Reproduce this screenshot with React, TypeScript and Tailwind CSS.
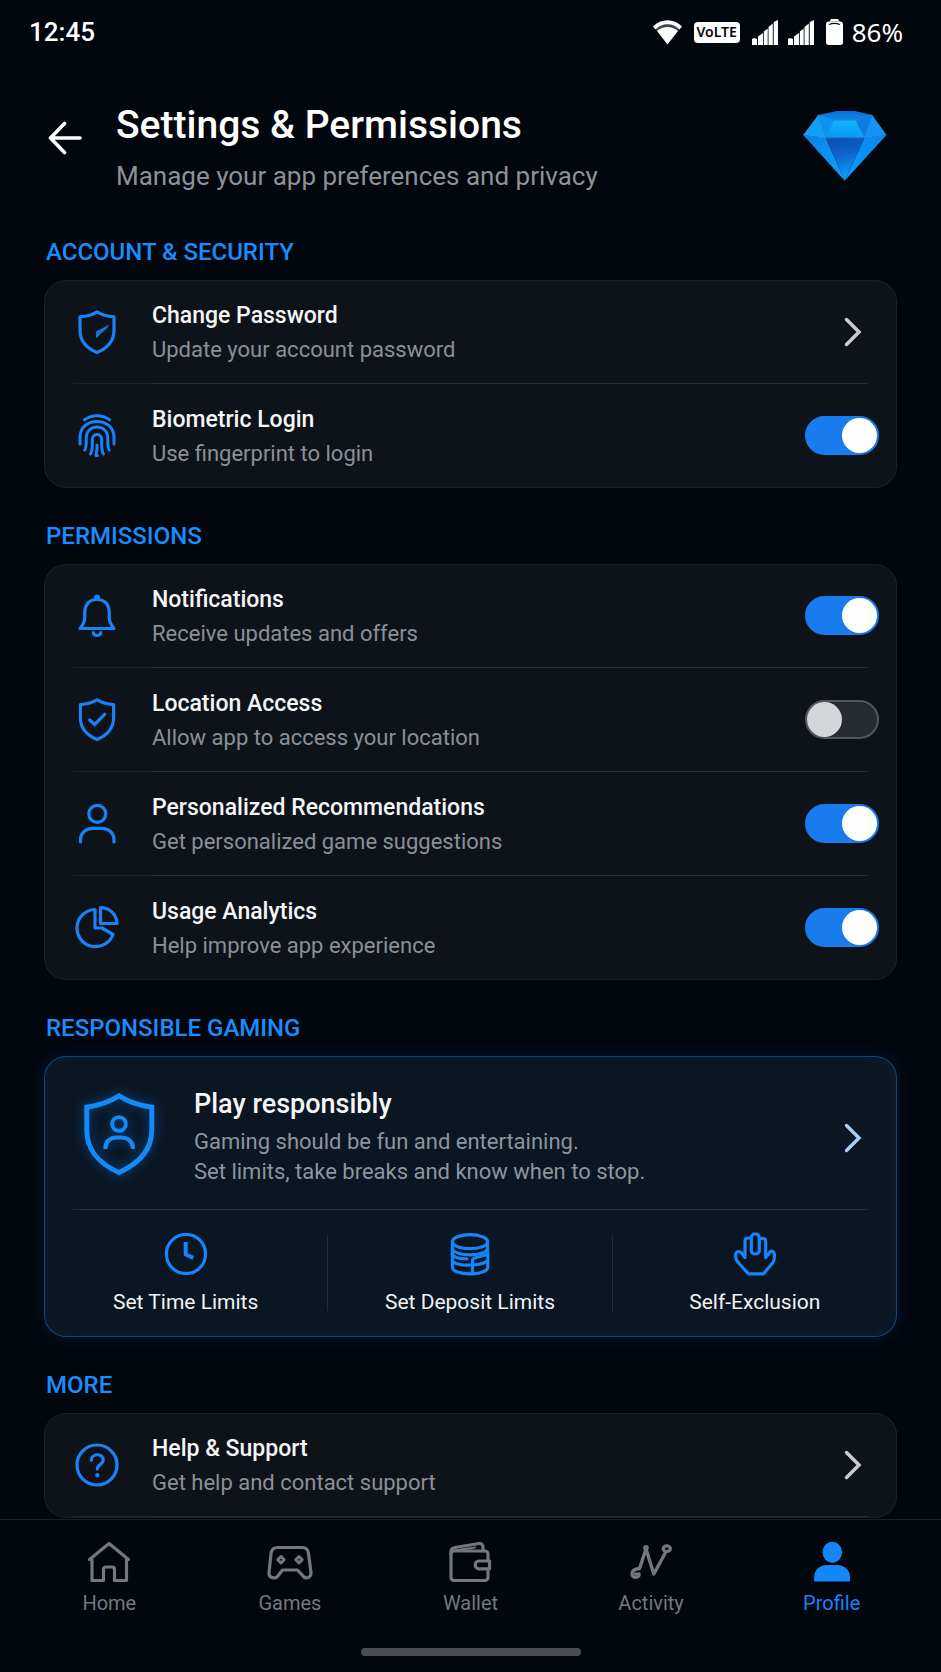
import React, { useState } from 'react';

interface IconProps {
  className?: string;
}

const line = {
  fill: 'none',
  stroke: 'currentColor',
  strokeWidth: 3.2,
  strokeLinecap: 'round' as const,
  strokeLinejoin: 'round' as const,
  'aria-hidden': true,
};

const SHIELD = 'M22 1.8C17 5 11 6.3 5 6.8V20c0 10.5 6 18 17 22.4 11-4.4 17-11.9 17-22.4V6.8C33 6.3 27 5 22 1.8z';

function ShieldKeyIcon({ className }: IconProps) {
  return (
    <svg viewBox="0 0 44 44" className={className} {...line}>
      <path d={SHIELD} />
      <path d="M34 14.5L32.5 18L26 23.5L22 27.8H21L20.8 21.5L25 19.5Z" fill="currentColor" stroke="none" opacity="0.85" />
    </svg>
  );
}

function ShieldCheckIcon({ className }: IconProps) {
  return (
    <svg viewBox="0 0 44 45" className={className} {...line}>
      <path d={SHIELD} />
      <path d="M14.5 22.5L19.5 27.2L30 16.5" />
    </svg>
  );
}

function FingerprintIcon({ className }: IconProps) {
  return (
    <svg viewBox="0 0 44 44" className={className} {...line} strokeWidth={3}>
      <path d="M9.5 5.8C17 .4 27 .4 34.5 5.8" />
      <path d="M5 30V23.5C5 2 39 2 39 23.5V30" />
      <path d="M9.8 36C11.5 33.5 11.2 31 11.2 24.5C11.2 9 32.8 9 32.8 24.5C32.8 31 32.5 33.5 34.2 36" />
      <path d="M15.5 40C17.8 36.5 17.3 33 17.3 26C17.3 18.5 26.7 18.5 26.7 26C26.7 33 26.2 36.5 28.5 40" />
      <path d="M22 31V35L21 41.5H22.5" />
    </svg>
  );
}

function BellIcon({ className }: IconProps) {
  return (
    <svg viewBox="0 0 44 44" className={className} {...line}>
      <path d="M22 5.5C14 5.5 9.8 11 9.8 18V23C9.8 28 8 31 5 34.5H39C36 31 34.2 28 34.2 23V18C34.2 11 30 5.5 22 5.5Z" />
      <circle cx="22" cy="3.6" r="1.5" />
      <path d="M18.3 38.5C18.3 42.5 25.7 42.5 25.7 38.5" />
    </svg>
  );
}

function PersonIcon({ className }: IconProps) {
  return (
    <svg viewBox="0 0 44 44" className={className} {...line}>
      <circle cx="22.3" cy="11.8" r="8.5" />
      <path d="M5.5 40V37.5C5.5 31 11 26.3 17.5 26.3H27C33.5 26.3 39 31 39 37.5V40" />
    </svg>
  );
}

function PieIcon({ className }: IconProps) {
  return (
    <svg viewBox="0 0 44 44" className={className} {...line}>
      <path d="M20 3.5V22H27L38 28.5A18.6 18.6 0 1 1 20 3.5Z" />
      <path d="M25.5 1.6V17.5H42A16.5 16.5 0 0 0 25.5 1.6Z" />
    </svg>
  );
}

function HelpIcon({ className }: IconProps) {
  return (
    <svg viewBox="0 0 44 44" className={className} {...line}>
      <circle cx="22" cy="22" r="20" />
      <path d="M16.3 17.2C16.3 10 28.3 10 28.3 17C28.3 21 22.3 21.5 22.3 26" />
      <path d="M22.3 32V32.6" strokeWidth={4} />
    </svg>
  );
}

function ClockIcon({ className }: IconProps) {
  return (
    <svg viewBox="0 0 44 44" className={className} {...line}>
      <circle cx="22" cy="22" r="19.6" />
      <path d="M21.7 12V22.5L27.5 25" strokeWidth={4} strokeLinecap="square" />
    </svg>
  );
}

function CoinsIcon({ className }: IconProps) {
  return (
    <svg viewBox="0 0 44 44" className={className} {...line}>
      <ellipse cx="22" cy="9.7" rx="17.6" ry="7" />
      <path d="M4.4 9.7V35.5C4.4 39 12 42 23 41.8" />
      <path d="M39.6 9.7V20" />
      <path d="M4.4 16.5C6 25 38 25 39.6 16.5" />
      <path d="M4.4 22.5C7 26 12 27 19 27" />
      <path d="M4.4 28.5C7 33 14 33.5 22 33" />
      <path d="M24.5 28.5C24.5 26.5 26 26 28 25.5C33 24.500 37 23.500 39.800 21.500V35.500C39.800 38.500 33 41.800 24.500 41.800Z" />
      <path d="M25 33C31 32.5 37 31 39.8 28.5" />
    </svg>
  );
}

function HandIcon({ className }: IconProps) {
  return (
    <svg viewBox="0 0 44 44" className={className} {...line}>
      <rect x="18.3" y="2" width="8" height="20" rx="3.5" />
      <path d="M18 6H15C12.5 6 12 7.5 12 9.5V25.5L8.5 21C5.5 18 2 20 2.6 24.5C2.6 28 4 29.5 15.5 41.8H30.5L40 30.5C41.5 28.5 41.5 27 41.5 24C41.5 18.5 37.5 17.5 36 21.5L32.7 25.5V9.5C32.7 7 32 6 26.5 6.5" />
    </svg>
  );
}

function HomeIcon({ className }: IconProps) {
  return (
    <svg viewBox="0 0 44 44" className={className} {...line}>
      <path d="M5 19.5H2.5L22 3.5L41.5 19.5H39.5V40.5H27.5V29.5C27.5 28 26.5 27 25 27H19C17.5 27 16.5 28 16.5 29.5V40.5H5Z" />
    </svg>
  );
}

function GamepadIcon({ className }: IconProps) {
  return (
    <svg viewBox="0 0 48 44" className={className} {...line}>
      <path d="M11.5 7.5H36.5C40.5 7.5 42 10 42.5 13.5L45 32.5C45.5 37 40.5 39.5 37.5 36.5L31.5 30H16.5L11.5 36.5C8.5 39.5 2.5 37.5 3 33L5 13.5C5.5 10 7.5 7.5 11.5 7.5Z" />
      <path d="M15 16.5L18.2 19.8L15 23L11.8 19.8Z" strokeWidth={3} />
      <path d="M33 16.5L36.2 19.8L33 23L29.8 19.8Z" strokeWidth={3} />
    </svg>
  );
}

function WalletIcon({ className }: IconProps) {
  return (
    <svg viewBox="0 0 44 44" className={className} {...line}>
      <rect x="3" y="11" width="37" height="29.5" rx="3" />
      <path d="M3 14V11C3 8.5 4.5 8 7 7.5L31 3.5C34 3.2 35 5 35 7.5V11" />
      <path d="M6 10.5L27 7.5" strokeWidth={2} />
      <path d="M41.5 21H31C26 21 26 28.8 31 28.8H41.5Z" className="fill-[#02060d]" />
    </svg>
  );
}

function ActivityIcon({ className }: IconProps) {
  return (
    <svg viewBox="0 0 44 44" className={className} {...line}>
      <path d="M10 34C11 37.5 3 39 3 34C3 30 6.5 29 10.5 28.5L17 9L24.8 34L36.5 12.5" strokeWidth={3.4} />
      <path d="M6.5 34H8" />
      <circle cx="17" cy="7.8" r="1.2" />
      <ellipse cx="37.8" cy="8.7" rx="3.6" ry="2.8" />
    </svg>
  );
}

function ProfileIcon({ className }: IconProps) {
  return (
    <svg viewBox="0 0 44 44" className={className} fill="currentColor" aria-hidden>
      <ellipse cx="22.3" cy="12.3" rx="9.8" ry="10.6" />
      <path d="M4.2 41.5V37C4.2 30 9.5 25 17 25H27C34.5 25 40 30 40 37V41.5Z" />
    </svg>
  );
}

function ResponsibleShieldIcon({ className }: IconProps) {
  return (
    <svg viewBox="0 0 72 84" className={className} {...line} strokeWidth={5} strokeLinejoin="miter">
      <path d="M36 3.8C27 9.5 15 13.5 3.8 15.2V38C3.8 58 15 71 36 80.5C57 71 68.8 58 68.8 38V15.2C57 13.5 45 9.5 36 3.8Z" />
      <circle cx="36" cy="32" r="6.9" strokeWidth={3.8} />
      <path d="M22.5 57V55.5C22.5 49 28 45.5 33 45.5H39C44 45.5 49.8 49 49.8 55.5V57" strokeWidth={4.2} strokeLinecap="butt" />
    </svg>
  );
}

function ChevronIcon({ className }: IconProps) {
  return (
    <svg viewBox="0 0 18 32" className={className} {...line} strokeWidth={3.5} strokeLinejoin="miter">
      <path d="M2.5 3.5L15 16L2.5 28.5" />
    </svg>
  );
}

function DiamondLogo({ className }: IconProps) {
  return (
    <svg viewBox="0 0 252 211" className={className} aria-hidden>
      <defs>
        <linearGradient id="table" x1="0" y1="0" x2="0" y2="1">
          <stop offset="0" stopColor="#0a6fd6" />
          <stop offset="1" stopColor="#1184ea" />
        </linearGradient>
        <linearGradient id="front" x1="0" y1="0" x2="0" y2="1">
          <stop offset="0" stopColor="#10b4fc" />
          <stop offset="1" stopColor="#0a98f6" />
        </linearGradient>
        <linearGradient id="pavilion" x1="0" y1="0" x2="0.2" y2="1">
          <stop offset="0" stopColor="#0b4cae" />
          <stop offset="0.45" stopColor="#0f62cc" />
          <stop offset="1" stopColor="#0aa0fb" />
        </linearGradient>
        <linearGradient id="side" x1="0" y1="0" x2="1" y2="1">
          <stop offset="0" stopColor="#0c7fe6" />
          <stop offset="1" stopColor="#08a6ff" />
        </linearGradient>
        <linearGradient id="sideRight" x1="1" y1="0" x2="0" y2="1">
          <stop offset="0" stopColor="#0a84ec" />
          <stop offset="1" stopColor="#08a0ff" />
        </linearGradient>
      </defs>
      <path d="M45 12L102 0H155L208 12L158 28H92Z" fill="url(#table)" />
      <path d="M92 28H158L185 81H68Z" fill="url(#front)" />
      <path d="M45 12L92 28L68 81Z" fill="#0b93f0" />
      <path d="M45 12L68 81L0 72Z" fill="#129ff8" />
      <path d="M208 12L158 28L185 81Z" fill="#0a7de2" />
      <path d="M208 12L185 81L251 72Z" fill="#1493f4" />
      <path d="M0 72L68 81L125 210Z" fill="url(#side)" />
      <path d="M251 72L185 81L125 210Z" fill="url(#sideRight)" />
      <path d="M68 81H185L125 210Z" fill="url(#pavilion)" />
      <path d="M45 12L92 28H158L208 12M92 28L68 81L45 12M158 28L185 81L208 12M0 72L68 81H185L251 72" fill="none" stroke="#3cc0ff" strokeWidth="2" opacity="0.55" />
    </svg>
  );
}

function SignalIcon({ className }: IconProps) {
  return (
    <svg viewBox="0 0 26 25" className={className} fill="currentColor" aria-hidden>
      <path d="M0 19L2 18L5 19V25H0ZM6 16.5L11 13V25H6ZM11.8 11.5L15.7 8.5V25H11.8ZM16.5 7L20.8 3.5V25H16.5ZM21.7 2L26 0V25H21.7Z" />
    </svg>
  );
}

function StatusBar() {
  return (
    <div className="flex h-16 items-center justify-between pr-[38px] pl-[29px]">
      <span className="text-[26px] leading-8 font-medium">12:45</span>
      <div className="flex items-center">
        <svg viewBox="0 0 29 25" className="h-[25px] w-[29px]" fill="currentColor" aria-label="Wi-Fi">
          <path d="M0 6.5C8-2 21-2 29 6.5L26.5 9.5C19.5 2.5 9.5 2.5 2.5 9.5Z" />
          <path d="M4 11C10 5.5 19 5.5 25 11L14.5 24.5Z" />
          <path d="M2.5 9.5C9.5 2.5 19.5 2.5 26.5 9.5L25 11C19 5.5 10 5.5 4 11Z" opacity="0.25" />
        </svg>
        <span className="ml-3 flex h-[21px] w-[46px] items-center justify-center rounded-sm bg-white font-['Noto_Sans',sans-serif] text-[14px] leading-5 font-semibold text-[#02060d]">
          VoLTE
        </span>
        <SignalIcon className="ml-3 h-[25px] w-[26px]" />
        <SignalIcon className="ml-[10px] h-[25px] w-[26px]" />
        <svg viewBox="0 0 17 26" className="ml-3 h-[26px] w-[17px]" fill="currentColor" aria-label="Battery">
          <path d="M5 0H12L13.5 2.5H3.5Z" />
          <path d="M3 2.5H14C16 2.5 17 3.5 17 5.5V23.5C17 25 16 26 14.5 26H2.5C1 26 0 25 0 23.5V5.5C0 3.5 1 2.5 3 2.5Z" />
          <path d="M3 5.5C6 4.3 11 4.3 14 5.5" fill="none" stroke="#02060d" strokeWidth="1.2" />
        </svg>
        <span className="ml-[9px] font-['Noto_Sans',sans-serif] text-[26px] leading-8">86%</span>
      </div>
    </div>
  );
}

function Divider() {
  return (
    <div className="mx-[29px] flex h-px">
      <span className="w-20 bg-[#1d2229]" />
      <span className="flex-1 bg-[#272c33]" />
    </div>
  );
}

interface RowTextProps {
  icon: React.ComponentType<IconProps>;
  title: string;
  subtitle: string;
}

function RowText({ icon: Icon, title, subtitle }: RowTextProps) {
  return (
    <>
      <Icon className="size-11 shrink-0 text-[#1a82f7]" />
      <span className="ml-[33px] flex flex-1 flex-col gap-1 pt-px">
        <span className="text-[23px] leading-8 font-medium text-[#f5f6f8]">{title}</span>
        <span className="text-[22px] leading-7 text-[#8b9097]">{subtitle}</span>
      </span>
    </>
  );
}

function LinkRow(props: RowTextProps) {
  return (
    <button type="button" className="flex h-[103px] w-full items-center pr-[35px] pl-[31px] text-left">
      <RowText {...props} />
      <ChevronIcon className="h-8 w-[18px] text-[#c9cbcf]" />
    </button>
  );
}

function ToggleRow({ defaultOn, ...props }: RowTextProps & { defaultOn: boolean }) {
  const [on, setOn] = useState(defaultOn);

  return (
    <label className="flex h-[103px] w-full cursor-pointer items-center pr-[18px] pl-[31px]">
      <RowText {...props} />
      <input
        type="checkbox"
        role="switch"
        checked={on}
        onChange={() => setOn(!on)}
        className="flex h-[39px] w-[74px] shrink-0 cursor-pointer appearance-none items-center rounded-full border-2 border-[#53575d] bg-[#262b31] before:size-[35px] before:rounded-full before:bg-[#d5d6d9] checked:justify-end checked:border-[#187bee] checked:bg-[#187bee] checked:before:bg-white"
      />
    </label>
  );
}

function Section({ title, children }: { title: string; children: React.ReactNode }) {
  return (
    <section>
      <h2 className="mb-3 ml-[2px] text-[24px] leading-8 font-medium text-[#1b8cfb]">{title}</h2>
      {children}
    </section>
  );
}

function Card({ children }: { children: React.ReactNode }) {
  return (
    <div className="rounded-[22px] bg-[#0e131a] inset-ring inset-ring-[#1b2027] pb-px">
      {children}
    </div>
  );
}

const limits = [
  { label: 'Set Time Limits', icon: ClockIcon },
  { label: 'Set Deposit Limits', icon: CoinsIcon },
  { label: 'Self-Exclusion', icon: HandIcon },
];

function ResponsibleCard() {
  return (
    <div className="rounded-[22px] bg-[#0a1622] shadow-[0_0_18px_rgba(10,80,150,0.25),inset_0_0_24px_rgba(14,60,100,0.18)] inset-ring inset-ring-[#0c4780]">
      <button type="button" className="flex w-full items-center pt-8 pr-[35px] pb-[22px] pl-[39px] text-left">
        <ResponsibleShieldIcon className="mt-1 h-[84px] w-[72px] shrink-0 self-start text-[#128bf8] drop-shadow-[0_0_6px_rgba(10,110,220,0.6)]" />
        <span className="ml-[39px] flex flex-1 flex-col">
          <span className="mb-[7px] text-[27px] leading-8 font-medium text-[#f5f6f8]">Play responsibly</span>
          <span className="text-[22px] leading-[30px] text-[#8d959d]">Gaming should be fun and entertaining.</span>
          <span className="text-[22px] leading-[30px] text-[#8d959d]">Set limits, take breaks and know when to stop.</span>
        </span>
        <ChevronIcon className="h-8 w-[18px] text-[#a9cdf5]" />
      </button>
      <div className="mx-[29px] h-px bg-[#222d38]" />
      <div className="grid grid-cols-3 divide-x divide-[#222d38] pt-[25px] pb-[26px]">
        {limits.map(({ label, icon: Icon }) => (
          <button key={label} type="button" className="flex h-[76px] flex-col items-center justify-center gap-[14px]">
            <Icon className="size-11 shrink-0 text-[#1784fb]" />
            <span className="text-[21px] leading-6 text-[#f1f3f5]">{label}</span>
          </button>
        ))}
      </div>
    </div>
  );
}

const tabs = [
  { label: 'Home', icon: HomeIcon },
  { label: 'Games', icon: GamepadIcon },
  { label: 'Wallet', icon: WalletIcon },
  { label: 'Activity', icon: ActivityIcon },
  { label: 'Profile', icon: ProfileIcon, active: true },
];

function BottomNav() {
  return (
    <nav className="sticky bottom-0 mt-auto border-t border-[#1a1e24] bg-[#02060d] pt-5 pb-4">
      <div className="grid grid-cols-5 px-[19px]">
        {tabs.map(({ label, icon: Icon, active }) => (
          <a
            key={label}
            href={`#${label.toLowerCase()}`}
            aria-current={active ? 'page' : undefined}
            className={`flex flex-col items-center gap-[7px] ${active ? 'text-[#1585fb]' : 'text-[#74787e]'}`}
          >
            <Icon className="h-11" />
            <span className="text-[20px] leading-6">{label}</span>
          </a>
        ))}
      </div>
      <div className="mx-auto mt-[33px] h-2 w-[220px] rounded-full bg-[#4b4e52]" />
    </nav>
  );
}

export default function App() {
  return (
    <div className="flex min-h-screen flex-col bg-[#02060d] font-['Roboto',sans-serif] text-white">
      <StatusBar />

      <header className="flex items-center pt-9 pr-[54px] pl-12">
        <button type="button" aria-label="Back" className="-mt-4 shrink-0">
          <svg viewBox="0 0 34 34" className="size-[34px]" {...line} strokeWidth={3.6}>
            <path d="M32 17H2.5M16.5 2.5L2.5 17L16.5 31.5" />
          </svg>
        </button>
        <div className="ml-[34px] flex-1">
          <h1 className="text-[39px] leading-[50px] font-medium">Settings &amp; Permissions</h1>
          <p className="mt-[10px] text-[26px] leading-8 text-[#8d9198]">Manage your app preferences and privacy</p>
        </div>
        <DiamondLogo className="h-[70px] w-[84px]" />
      </header>

      <main className="flex flex-col gap-8 px-11 pt-11">
        <Section title="ACCOUNT & SECURITY">
          <Card>
            <LinkRow icon={ShieldKeyIcon} title="Change Password" subtitle="Update your account password" />
            <Divider />
            <ToggleRow icon={FingerprintIcon} title="Biometric Login" subtitle="Use fingerprint to login" defaultOn />
          </Card>
        </Section>

        <Section title="PERMISSIONS">
          <Card>
            <ToggleRow icon={BellIcon} title="Notifications" subtitle="Receive updates and offers" defaultOn />
            <Divider />
            <ToggleRow icon={ShieldCheckIcon} title="Location Access" subtitle="Allow app to access your location" defaultOn={false} />
            <Divider />
            <ToggleRow icon={PersonIcon} title="Personalized Recommendations" subtitle="Get personalized game suggestions" defaultOn />
            <Divider />
            <ToggleRow icon={PieIcon} title="Usage Analytics" subtitle="Help improve app experience" defaultOn />
          </Card>
        </Section>

        <Section title="RESPONSIBLE GAMING">
          <ResponsibleCard />
        </Section>

        <Section title="MORE">
          <Card>
            <LinkRow icon={HelpIcon} title="Help & Support" subtitle="Get help and contact support" />
            <Divider />
          </Card>
        </Section>
      </main>

      <BottomNav />
    </div>
  );
}
